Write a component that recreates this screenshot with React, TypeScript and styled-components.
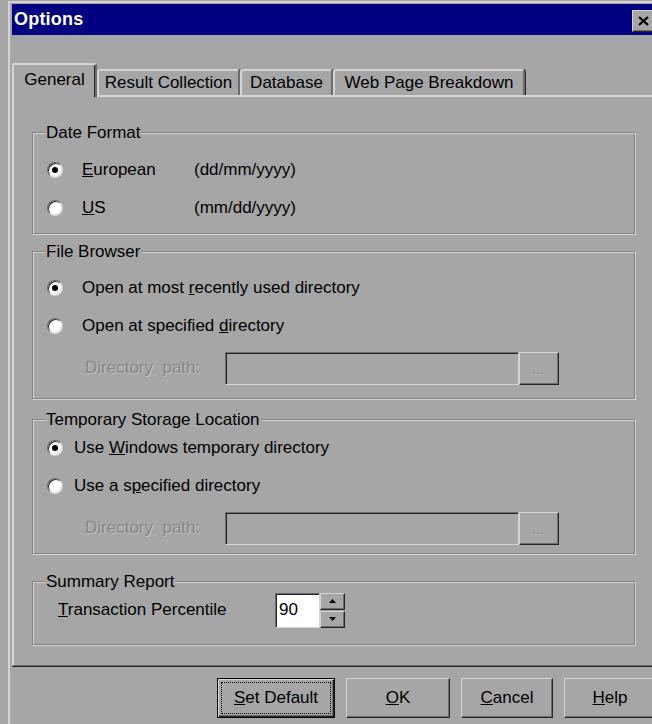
import React from 'react';
import styled, { createGlobalStyle } from 'styled-components';

// classic dialog palette
const face = '#a6a6a6';
const hilite = '#d4d4d4';
const shade = '#6c6c6c';
const dark = '#262626';

const GlobalStyle = createGlobalStyle`
  html, body {
    margin: 0;
    padding: 0;
    background: ${face};
  }
  body {
    font-family: "Liberation Sans", Arial, sans-serif;
    font-size: 17px;
    color: #000;
  }
`;

const Screen = styled.div`
  box-sizing: border-box;
  width: 652px;
  height: 724px;
  padding: 1px 0 0 8px;
  overflow: hidden;
  background: ${face};
`;

const Frame = styled.div`
  box-sizing: border-box;
  display: flex;
  flex-direction: column;
  width: 648px;
  height: 740px;
  padding: 1px 0 0 2px;
  border-top: 2px solid ${hilite};
  border-left: 2px solid ${hilite};
`;

const TitleBar = styled.div`
  display: flex;
  align-items: center;
  justify-content: space-between;
  height: 31px;
  padding: 0 2px 0 2px;
  background: #000080;
`;

const Title = styled.span`
  color: #fff;
  font-weight: bold;
  font-size: 18px;
  letter-spacing: 0.2px;
`;

const CloseButton = styled.div`
  box-sizing: border-box;
  display: flex;
  align-items: center;
  justify-content: center;
  width: 22px;
  height: 22px;
  margin-top: 3px;
  background: ${face};
  border-top: 1px solid ${hilite};
  border-left: 1px solid ${hilite};
  border-right: 1px solid ${dark};
  border-bottom: 1px solid ${dark};
  box-shadow: inset -1px -1px 0 ${shade};
`;

const TabStrip = styled.div`
  position: relative;
  z-index: 2;
  display: flex;
  align-items: flex-end;
  height: 32px;
  margin-top: 28px;
`;

const Tab = styled.div<{ $w: number; $active?: boolean }>`
  box-sizing: border-box;
  display: flex;
  align-items: center;
  justify-content: center;
  width: ${p => p.$w}px;
  height: ${p => (p.$active ? 34 : 26)}px;
  margin-bottom: ${p => (p.$active ? -2 : 0)}px;
  padding-bottom: ${p => (p.$active ? 3 : 0)}px;
  background: ${face};
  border-top: 2px solid ${hilite};
  border-left: 2px solid ${hilite};
  border-right: 2px solid ${shade};
  border-radius: 3px 3px 0 0;
  box-shadow: ${p => (p.$active ? `inset -1px 0 0 ${dark}` : `1px 0 0 ${dark}`)};
  white-space: nowrap;
`;

const Panel = styled.div`
  box-sizing: border-box;
  display: flex;
  flex-direction: column;
  height: 571px;
  padding: 0 20px 0 18px;
  border-top: 2px solid ${hilite};
  border-left: 2px solid ${hilite};
  border-bottom: 1px solid ${shade};
  box-shadow: 0 1px 0 ${dark};
`;

const Group = styled.fieldset<{ $mt: number; $pt: number; $pb: number }>`
  margin: ${p => p.$mt}px 0 0;
  padding: ${p => p.$pt}px 0 ${p => p.$pb}px;
  min-inline-size: 0;
  border: 2px groove ${hilite};
`;

const Legend = styled.legend`
  margin-left: 11px;
  padding: 0 1px;
  line-height: 18px;
`;

const Row = styled.div<{ $h?: number; $indent: number; $mt?: number }>`
  display: flex;
  align-items: center;
  height: ${p => p.$h ?? 38}px;
  margin-top: ${p => p.$mt ?? 0}px;
  padding-left: ${p => p.$indent}px;
`;

const Radio = styled.span<{ $on?: boolean }>`
  box-sizing: border-box;
  display: inline-flex;
  align-items: center;
  justify-content: center;
  flex: none;
  width: 16px;
  height: 16px;
  border-radius: 50%;
  background: #fff;
  border: 1px solid;
  border-color: ${shade} ${hilite} ${hilite} ${shade};
  box-shadow: inset 1px 1px 0 ${dark}, inset -1px -1px 0 #e4e4e4;

  &::after {
    content: '';
    display: ${p => (p.$on ? 'block' : 'none')};
    width: 6px;
    height: 6px;
    border-radius: 50%;
    background: #000;
  }
`;

const Label = styled.span<{ $gap: number; $w?: number }>`
  margin-left: ${p => p.$gap}px;
  width: ${p => (p.$w ? `${p.$w}px` : 'auto')};
  flex: none;
  white-space: nowrap;
`;

const DisabledLabel = styled.span<{ $w: number }>`
  width: ${p => p.$w}px;
  flex: none;
  color: #878787;
  text-shadow: 1px 1px 0 #c2c2c2;
  white-space: nowrap;
`;

const Field = styled.div<{ $w: number; $h?: number; $white?: boolean }>`
  box-sizing: border-box;
  display: flex;
  align-items: center;
  width: ${p => p.$w}px;
  height: ${p => p.$h ?? 33}px;
  padding-left: 3px;
  background: ${p => (p.$white ? '#fff' : face)};
  border-top: 1px solid ${shade};
  border-left: 1px solid ${shade};
  border-right: 1px solid ${hilite};
  border-bottom: 1px solid ${hilite};
  box-shadow: inset 1px 1px 0 ${dark};
`;

const SmallButton = styled.div<{ $w: number; $h: number }>`
  box-sizing: border-box;
  display: flex;
  align-items: center;
  justify-content: center;
  width: ${p => p.$w}px;
  height: ${p => p.$h}px;
  background: ${face};
  border-top: 1px solid ${hilite};
  border-left: 1px solid ${hilite};
  border-right: 1px solid ${dark};
  border-bottom: 1px solid ${dark};
  box-shadow: inset -1px -1px 0 ${shade};
`;

const Ellipsis = styled.span`
  margin-top: 4px;
  color: #878787;
  font-size: 11px;
  letter-spacing: 1px;
  text-shadow: 1px 1px 0 #c2c2c2;
`;

const Spin = styled.div`
  display: flex;
  flex-direction: column;
  gap: 1px;
`;

const Footer = styled.div`
  display: flex;
  justify-content: flex-end;
  gap: 11px;
  margin-top: 12px;
`;

const Button = styled.div<{ $w: number; $default?: boolean }>`
  box-sizing: border-box;
  display: flex;
  align-items: center;
  justify-content: center;
  width: ${p => p.$w}px;
  height: 40px;
  padding: 3px;
  background: ${face};
  border: 1px solid;
  border-color: ${p => (p.$default ? '#000' : `${hilite} ${dark} ${dark} ${hilite}`)};
  box-shadow: ${p =>
    p.$default
      ? `inset 1px 1px 0 ${hilite}, inset -1px -1px 0 ${dark}, inset -2px -2px 0 ${shade}`
      : `inset -1px -1px 0 ${shade}`};
`;

const FocusRing = styled.span<{ $show?: boolean }>`
  box-sizing: border-box;
  display: flex;
  align-items: center;
  justify-content: center;
  width: 100%;
  height: 100%;
  border: 1px dotted ${p => (p.$show ? '#000' : 'transparent')};
`;

const Arrow = ({ up }: { up?: boolean }) => (
  <svg width="7" height="4" viewBox="0 0 7 4">
    <path d={up ? 'M3.5 0 L7 4 L0 4 Z' : 'M0 0 L7 0 L3.5 4 Z'} fill="#000" />
  </svg>
);

const PathRow = ({ mt }: { mt: number }) => (
  <Row $h={34} $mt={mt} $indent={51}>
    <DisabledLabel $w={140}>Directory&nbsp; path:</DisabledLabel>
    <Field $w={294} />
    <SmallButton $w={40} $h={33}>
      <Ellipsis>...</Ellipsis>
    </SmallButton>
  </Row>
);

const App: React.FC = () => {
  return (
    <Screen>
      <GlobalStyle />
      <Frame>
        <TitleBar>
          <Title>Options</Title>
          <CloseButton>
            <svg width="11" height="10" viewBox="0 0 11 10">
              <path d="M1 1 L10 9 M10 1 L1 9" stroke="#000" strokeWidth="2.2" />
            </svg>
          </CloseButton>
        </TitleBar>

        <TabStrip>
          <Tab $w={85} $active>General</Tab>
          <Tab $w={143}>Result Collection</Tab>
          <Tab $w={93}>Database</Tab>
          <Tab $w={192}>Web Page Breakdown</Tab>
        </TabStrip>

        <Panel>
          <Group $mt={27} $pt={9} $pb={6}>
            <Legend>Date Format</Legend>
            <Row $indent={13}>
              <Radio $on />
              <Label $gap={19} $w={112}>
                <u>E</u>uropean
              </Label>
              <span>(dd/mm/yyyy)</span>
            </Row>
            <Row $indent={13}>
              <Radio />
              <Label $gap={19} $w={112}>
                <u>U</u>S
              </Label>
              <span>(mm/dd/yyyy)</span>
            </Row>
          </Group>

          <Group $mt={8} $pt={8} $pb={13}>
            <Legend>File Browser</Legend>
            <Row $indent={13}>
              <Radio $on />
              <Label $gap={19}>
                Open at most <u>r</u>ecently used directory
              </Label>
            </Row>
            <Row $indent={13}>
              <Radio />
              <Label $gap={19}>
                Open at specified <u>d</u>irectory
              </Label>
            </Row>
            <PathRow mt={6} />
          </Group>

          <Group $mt={11} $pt={0} $pb={8}>
            <Legend>Temporary Storage Location</Legend>
            <Row $indent={13}>
              <Radio $on />
              <Label $gap={11}>
                Use <u>W</u>indows temporary directory
              </Label>
            </Row>
            <Row $indent={13}>
              <Radio />
              <Label $gap={11}>
                Use a s<u>p</u>ecified directory
              </Label>
            </Row>
            <PathRow mt={6} />
          </Group>

          <Group $mt={18} $pt={1} $pb={16}>
            <Legend>Summary Report</Legend>
            <Row $h={36} $indent={24}>
              <Label $gap={0} $w={217}>
                <u>T</u>ransaction Percentile
              </Label>
              <Field $w={45} $h={35} $white>
                90
              </Field>
              <Spin>
                <SmallButton $w={25} $h={17}>
                  <Arrow up />
                </SmallButton>
                <SmallButton $w={25} $h={17}>
                  <Arrow />
                </SmallButton>
              </Spin>
            </Row>
          </Group>
        </Panel>

        <Footer>
          <Button $w={118} $default>
            <FocusRing $show>
              <u>S</u>et Default
            </FocusRing>
          </Button>
          <Button $w={104}>
            <FocusRing>
              <u>O</u>K
            </FocusRing>
          </Button>
          <Button $w={92}>
            <FocusRing>
              <u>C</u>ancel
            </FocusRing>
          </Button>
          <Button $w={92}>
            <FocusRing>
              <u>H</u>elp
            </FocusRing>
          </Button>
        </Footer>
      </Frame>
    </Screen>
  );
};

export default App;
